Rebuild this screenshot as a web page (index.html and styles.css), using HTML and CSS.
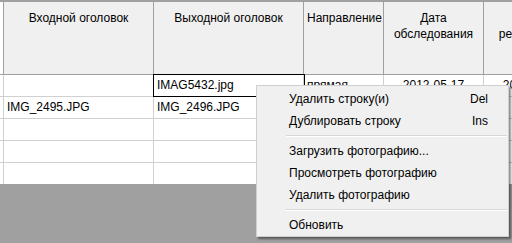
FILE: index.html
```html
<!DOCTYPE html>
<html lang="ru">

<head>
    <meta charset="UTF-8">
    <meta name="viewport" content="width=device-width, initial-scale=1.0">
    <title>Фотографии</title>

    <link rel="stylesheet" href="styles.css">
</head>

<body>
    <div class="main">
        <div class="grid">
            <div class="row head">
                <div class="cell rh"></div>
                <div class="cell c1">Входной оголовок</div>
                <div class="cell c2">Выходной оголовок</div>
                <div class="cell c3">Направление</div>
                <div class="cell c4">Дата обследования</div>
                <div class="cell c5">Дата регистрации</div>
            </div>
            <div class="row">
                <div class="cell rh"></div>
                <div class="cell c1"></div>
                <div class="cell c2 editing">IMAG5432.jpg</div>
                <div class="cell c3">прямая</div>
                <div class="cell c4 center">2012-05-17</div>
                <div class="cell c5 center">2012-05-20</div>
            </div>
            <div class="row">
                <div class="cell rh"></div>
                <div class="cell c1">IMG_2495.JPG</div>
                <div class="cell c2">IMG_2496.JPG</div>
                <div class="cell c3"></div>
                <div class="cell c4"></div>
                <div class="cell c5"></div>
            </div>
            <div class="row">
                <div class="cell rh"></div>
                <div class="cell c1"></div>
                <div class="cell c2"></div>
                <div class="cell c3"></div>
                <div class="cell c4"></div>
                <div class="cell c5"></div>
            </div>
            <div class="row">
                <div class="cell rh"></div>
                <div class="cell c1"></div>
                <div class="cell c2"></div>
                <div class="cell c3"></div>
                <div class="cell c4"></div>
                <div class="cell c5"></div>
            </div>
            <div class="row">
                <div class="cell rh"></div>
                <div class="cell c1"></div>
                <div class="cell c2"></div>
                <div class="cell c3"></div>
                <div class="cell c4"></div>
                <div class="cell c5"></div>
            </div>
        </div>

        <!-- context menu over the grid -->
        <div class="menu">
            <div class="item"><span>Удалить строку(и)</span><span class="key">Del</span></div>
            <div class="item"><span>Дублировать строку</span><span class="key">Ins</span></div>
            <div class="sep"></div>
            <div class="item"><span>Загрузить фотографию...</span></div>
            <div class="item"><span>Просмотреть фотографию</span></div>
            <div class="item"><span>Удалить фотографию</span></div>
            <div class="sep"></div>
            <div class="item"><span>Обновить</span></div>
        </div>
    </div>
</body>

</html>
```

FILE: styles.css
```css
* {
    box-sizing: border-box;
}

body {
    margin: 0;
    background-color: #a0a0a0;
    font-family: "Liberation Sans", Arial, sans-serif;
    font-size: 12px;
    color: #000;
    overflow: hidden;
}

.main {
    position: relative;
    width: 512px;
    height: 243px;
    overflow: hidden;
}

.grid {
    width: 600px;
    background-color: #fff;
    border-top: 2px solid #a0a0a0;
}

.row {
    display: flex;
    height: 22px;
    border-bottom: 1px solid #d0d0d0;
}

.row:last-child {
    border-bottom-color: #a0a0a0;
}

.row.head {
    height: 73px;
    background-color: #f0f0f0;
    border-bottom: 1px solid #a0a0a0;
}

.cell {
    flex: none;
    height: 100%;
    border-right: 1px solid #d0d0d0;
    padding: 0 3px;
    line-height: 21px;
    white-space: nowrap;
}

.head .cell {
    border-right-color: #a0a0a0;
    text-align: center;
    white-space: normal;
    line-height: 16px;
    padding-top: 8px;
}

.rh {
    width: 4px;
    padding: 0;
}

.head .rh {
    background-color: #fff;
}

.c1,
.c2 {
    width: 150px;
}

.c3 {
    width: 80px;
}

.c4,
.c5 {
    width: 100px;
}

.center {
    text-align: center;
}

.editing {
    outline: 1px solid #000;
    outline-offset: 0;
    position: relative;
    z-index: 1;
}

.menu {
    position: absolute;
    left: 256px;
    top: 85px;
    width: 253px;
    padding: 2px 0 0;
    background-color: #f0f0f0;
    border: 1px solid #cfcfcf;
    box-shadow: 2px 2px 2px rgba(0, 0, 0, 0.45);
    z-index: 2;
}

.item {
    display: flex;
    justify-content: space-between;
    height: 22px;
    line-height: 22px;
    padding: 0 20px 0 32px;
}

.sep {
    height: 8px;
    padding-top: 3px;
    margin: 0 1px 0 29px;
}

.sep::after {
    content: "";
    display: block;
    height: 1px;
    background-color: #d7d7d7;
    border-bottom: 1px solid #fff;
}
```
